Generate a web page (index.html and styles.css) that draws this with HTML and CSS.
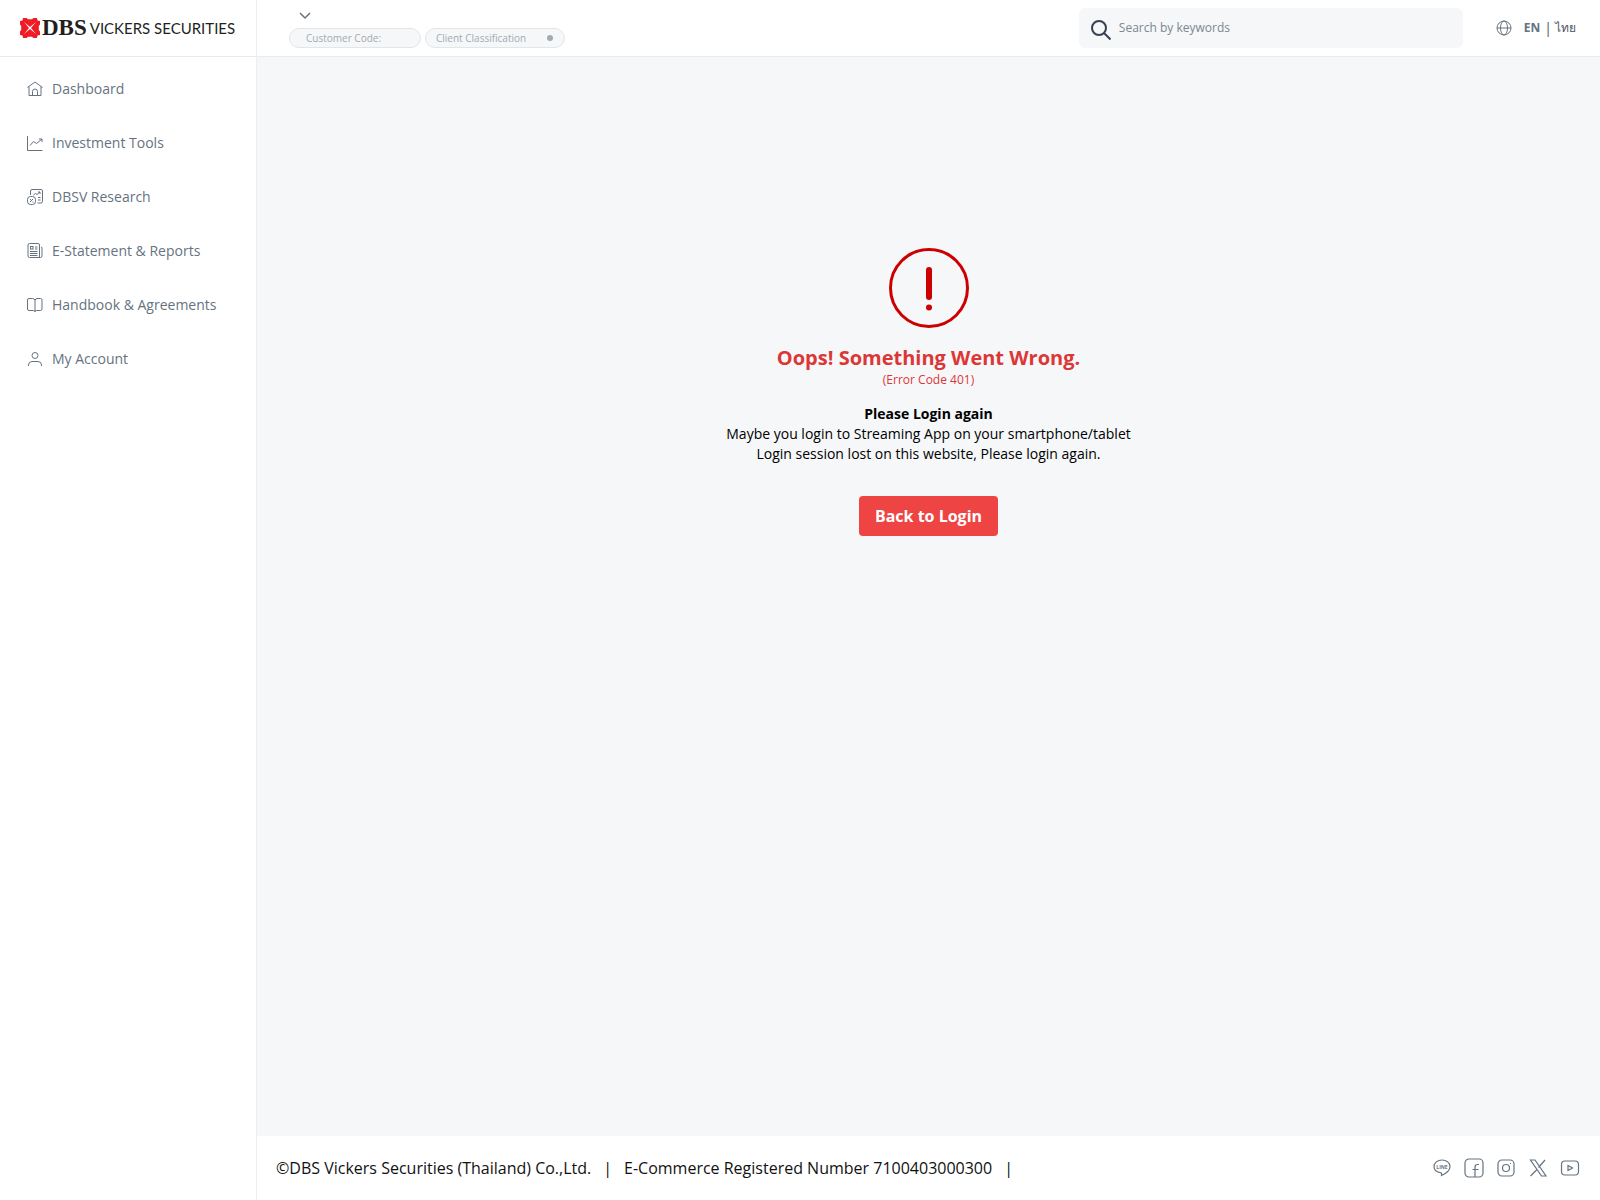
FILE: index.html
```
<!DOCTYPE html>
<html lang="en">
<head>
    <meta charset="UTF-8">
    <meta name="viewport" content="width=device-width, initial-scale=1.0">
    <title>DBS Vickers Securities</title>
    <link rel="stylesheet" href="styles.css">
</head>
<body>
    <aside class="sidebar">
        <a href="#" class="logo">
            <svg class="logo-mark" viewBox="0 0 20 20">
                <path fill="#ee1c25" d="M3 0h3.500l1.500 1.200h4L13.500 0H17l.5 2.500L20 3v3.500L18.800 8v4l1.200 1.500V17l-2.500.5L17 20h-3.500L12 18.800H8L6.500 20H3l-.5-2.500L0 17v-3.500L1.200 12V8L0 6.500V3l2.500-.5z"/>
                <path fill="#fff" d="M4 4L10 9l6-5-5 6 5 6-6-5-6 5 5-6z"/>
            </svg>
            <span class="logo-dbs">DBS</span>
            <span class="logo-name">VICKERS SECURITIES</span>
        </a>
        <nav class="menu">
            <a href="#" class="menu-item">
                <svg class="icon" viewBox="0 0 16 16"><path d="M.5 6.500L8 1l7.500 5.500M2 5.500V14.500h12V5.500M5.500 14.500V10.500a2.500 2.500 0 0 1 5 0v4"/></svg>
                Dashboard
            </a>
            <a href="#" class="menu-item">
                <svg class="icon" viewBox="0 0 16 16"><path d="M.5 1v14.500H15.500M3 10.500l3.500-4 3 2L15 4M12 4h3v3"/></svg>
                Investment Tools
            </a>
            <a href="#" class="menu-item">
                <svg class="icon" viewBox="0 0 16 16"><path d="M3.500 6V2Q3.500.5 5 .5h9q1.500 0 1.500 1.500v10.500q0 1.500-1.500 1.500h-3.500M6.500 6l2-1.500 1.500 1 3-2.500M11 3h2v2M11 8.500h2.500M11 11h2.500"/><rect x=".5" y="7.500" width="8" height="8" rx="3"/><path d="M3 13l3-3M3.500 10v1M6 12.500v1"/></svg>
                DBSV Research
            </a>
            <a href="#" class="menu-item">
                <svg class="icon" viewBox="0 0 16 16"><path d="M12.500 14.500V2Q12.500.5 11 .5H2.500Q1 .5 1 2v11q0 1.500 1.500 1.500h11Q15 14.500 15 13V5q0-1-1-1M3 8.500h7.500M3 10.500h7.500M3 12.500h7.500M8 4h2.500M8 6h2.500"/><rect x="3.500" y="3.500" width="2.500" height="2.500"/></svg>
                E-Statement &amp; Reports
            </a>
            <a href="#" class="menu-item">
                <svg class="icon" viewBox="0 0 16 16"><path d="M8 3.500Q7.500 1.500 5.500 1.500H2Q.5 1.500.5 3v9q0 1.500 1.500 1.500h4.500q1.500 0 1.500 1.500 0-1.500 1.500-1.500H13.500q1.500 0 1.500-1.500V3q0-1.500-1.500-1.500h-3.500Q8.500 1.500 8 3.500zV14"/></svg>
                Handbook &amp; Agreements
            </a>
            <a href="#" class="menu-item">
                <svg class="icon" viewBox="0 0 16 16"><circle cx="8" cy="4.500" r="3"/><path d="M1.500 15v-1Q1.500 10.500 5 10.500h6q3.500 0 3.500 3.500v1"/></svg>
                My Account
            </a>
        </nav>
    </aside>

    <div class="page">
        <header class="topbar">
            <div class="customer">
                <button type="button" class="customer-toggle" aria-label="Select account">
                    <svg viewBox="0 0 12 8"><path d="M1 1l5 5 5-5"/></svg>
                </button>
                <div class="tags">
                    <span class="tag tag-code">Customer Code:</span>
                    <span class="tag tag-class">Client Classification <span class="dot"></span></span>
                </div>
            </div>
            <label class="search">
                <svg class="search-icon" viewBox="0 0 20 20"><circle cx="8" cy="8" r="7"/><path d="M13 13l6.500 6.500"/></svg>
                <input type="search" placeholder="Search by keywords" aria-label="Search by keywords">
            </label>
            <div class="lang">
                <svg class="icon" viewBox="0 0 16 16"><circle cx="8" cy="8" r="7"/><ellipse cx="8" cy="8" rx="3.500" ry="7"/><path d="M1 8h14"/></svg>
                <a href="#" class="lang-en">EN</a>
                <span>|</span>
                <a href="#" class="lang-th" lang="th">ไทย</a>
            </div>
        </header>

        <main class="content">
            <svg class="error-icon" viewBox="0 0 80 80">
                <circle cx="40" cy="40" r="38.500"/>
                <path d="M40 22v27"/>
                <circle class="error-dot" cx="40" cy="59.500" r="3"/>
            </svg>
            <h1 class="error-title">Oops! Something Went Wrong.</h1>
            <p class="error-code">(Error Code 401)</p>
            <div class="error-text">
                <strong>Please Login again</strong>
                <p>Maybe you login to Streaming App on your smartphone/tablet</p>
                <p>Login session lost on this website, Please login again.</p>
            </div>
            <button type="button" class="login-button">Back to Login</button>
        </main>

        <footer class="footer">
            <div class="footer-text">
                <span>©DBS Vickers Securities (Thailand) Co.,Ltd.</span>
                <span>|</span>
                <span>E-Commerce Registered Number 7100403000300</span>
                <span>|</span>
            </div>
            <div class="social">
                <a href="#" aria-label="LINE"><svg viewBox="0 0 20 20"><path d="M10 2C5.500 2 2 4.800 2 8.500c0 3.300 2.800 5.700 7 6.300.8.200.6 1 .5 2.700C14 15.500 18 12 18 8.500 18 4.800 14.500 2 10 2z"/><text x="10" y="10.500" text-anchor="middle">LINE</text></svg></a>
                <a href="#" aria-label="Facebook"><svg viewBox="0 0 20 20"><rect x="1" y="1" width="18" height="18" rx="4"/><path d="M11 19V9.500Q11 6.500 13.500 6.500H15M8.500 11.500h6"/></svg></a>
                <a href="#" aria-label="Instagram"><svg viewBox="0 0 20 20"><rect x="2" y="2" width="16" height="16" rx="4"/><circle cx="10" cy="10" r="3.500"/><path d="M14 5.500h1"/></svg></a>
                <a href="#" aria-label="X"><svg viewBox="0 0 20 20"><path d="M2.500 2h4.500l11 16h-4.500zM17 2l-6.500 7.500M9 11.500L2.500 18"/></svg></a>
                <a href="#" aria-label="YouTube"><svg viewBox="0 0 20 20"><rect x="1.500" y="3" width="17" height="14" rx="3.500"/><path d="M8 7.500v5l4.500-2.500z"/></svg></a>
            </div>
        </footer>
    </div>
</body>
</html>
```
FILE: styles.css
```
* {
    margin: 0;
    padding: 0;
    box-sizing: border-box;
}

body {
    font-family: 'Open Sans', 'Noto Sans', sans-serif;
    font-size: 14px;
    line-height: 20px;
    color: #66737f;
    background: #f5f7f9;
    min-height: 100vh;
    display: flex;
}

a {
    color: inherit;
    text-decoration: none;
}

button,
input {
    font: inherit;
    color: inherit;
    border: none;
    background: none;
}

svg {
    display: block;
    fill: none;
    stroke: currentColor;
}

.icon {
    width: 16px;
    height: 16px;
    flex: none;
}

/* sidebar */
.sidebar {
    width: 257px;
    flex: none;
    background: #fff;
    border-right: 1px solid #ebeef2;
}

.logo {
    height: 57px;
    padding-left: 20px;
    border-bottom: 1px solid #ebebeb;
    display: flex;
    align-items: center;
    color: #231f20;
    white-space: nowrap;
}

.logo-mark {
    width: 20px;
    height: 20px;
    stroke: none;
}

.logo-dbs {
    font-family: 'Liberation Serif', serif;
    font-size: 23px;
    font-weight: bold;
    margin-left: 2px;
}

.logo-name {
    font-family: 'Lato', sans-serif;
    font-size: 15px;
    margin-left: 3px;
}

.menu {
    padding: 5px 0;
}

.menu-item {
    height: 54px;
    padding-left: 27px;
    display: flex;
    align-items: center;
    gap: 9px;
}

/* header */
.page {
    flex: 1;
    min-width: 0;
    display: flex;
    flex-direction: column;
}

.topbar {
    height: 57px;
    padding: 0 24px 0 32px;
    background: #fff;
    border-bottom: 1px solid #ebebeb;
    display: flex;
    align-items: center;
}

.customer {
    flex: 1;
    padding-top: 4px;
}

.customer-toggle {
    display: block;
    padding: 0 10px 8px;
}

.customer-toggle svg {
    width: 12px;
    height: 8px;
    stroke-width: 1.5;
}

.tags {
    display: flex;
    gap: 4px;
    font-size: 10px;
    line-height: 18px;
    color: #a3aab1;
}

.tag {
    height: 20px;
    background: #f5f7f9;
    border: 1px solid #e3e6e9;
    border-radius: 10px;
    display: flex;
    align-items: center;
    justify-content: space-between;
}

.tag-code {
    width: 132px;
    padding: 0 16px;
}

.tag-class {
    width: 140px;
    padding: 0 11px 0 10px;
}

.dot {
    width: 6px;
    height: 6px;
    border-radius: 50%;
    background: #a3aab1;
}

.search {
    width: 384px;
    height: 40px;
    padding: 0 12px;
    background: #f5f7f9;
    border-radius: 6px;
    display: flex;
    align-items: center;
    gap: 8px;
}

.search-icon {
    width: 20px;
    height: 20px;
    margin-top: 4px;
    color: #374151;
    stroke-width: 2;
}

.search input {
    flex: 1;
    min-width: 0;
    font-size: 12px;
    outline: none;
}

.search input::placeholder {
    color: #7b8791;
}

.lang {
    margin-left: 33px;
    display: flex;
    align-items: center;
    color: #4b5563;
}

.lang .icon {
    color: #66737f;
    margin-right: 12px;
}

.lang-en {
    font-size: 12px;
    font-weight: bold;
    color: #66737f;
    margin-right: 4px;
}

.lang-th {
    font-size: 12px;
    margin-left: 3px;
}

/* error message */
.content {
    flex: 1;
    padding: 191px 24px 24px;
    display: flex;
    flex-direction: column;
    align-items: center;
    text-align: center;
    color: #000;
}

.error-icon {
    width: 80px;
    height: 80px;
    margin-bottom: 16px;
    color: #c00;
    stroke-width: 3;
}

.error-icon path {
    stroke-width: 6;
    stroke-linecap: round;
}

.error-icon .error-dot {
    fill: currentColor;
    stroke: none;
}

.error-title {
    font-size: 20px;
    line-height: 28px;
    color: #dc3737;
}

.error-code {
    font-size: 12px;
    line-height: 16px;
    color: #dc3737;
}

.error-text {
    margin: 16px 0 32px;
}

.login-button {
    padding: 8px 16px;
    font-size: 16px;
    font-weight: bold;
    line-height: 24px;
    color: #fff;
    background: #ef4444;
    border-radius: 4px;
    cursor: pointer;
}

/* footer */
.footer {
    height: 64px;
    padding: 0 20px 0 19px;
    background: #fff;
    display: flex;
    align-items: center;
    justify-content: space-between;
}

.footer-text {
    display: flex;
    gap: 12px;
    font-size: 16px;
    line-height: 24px;
    color: #111;
}

.social {
    display: flex;
    gap: 12px;
}

.social svg {
    width: 20px;
    height: 20px;
    stroke-width: 1.2;
}

.social text {
    font-size: 5px;
    font-weight: bold;
    fill: currentColor;
    stroke: none;
}
```
